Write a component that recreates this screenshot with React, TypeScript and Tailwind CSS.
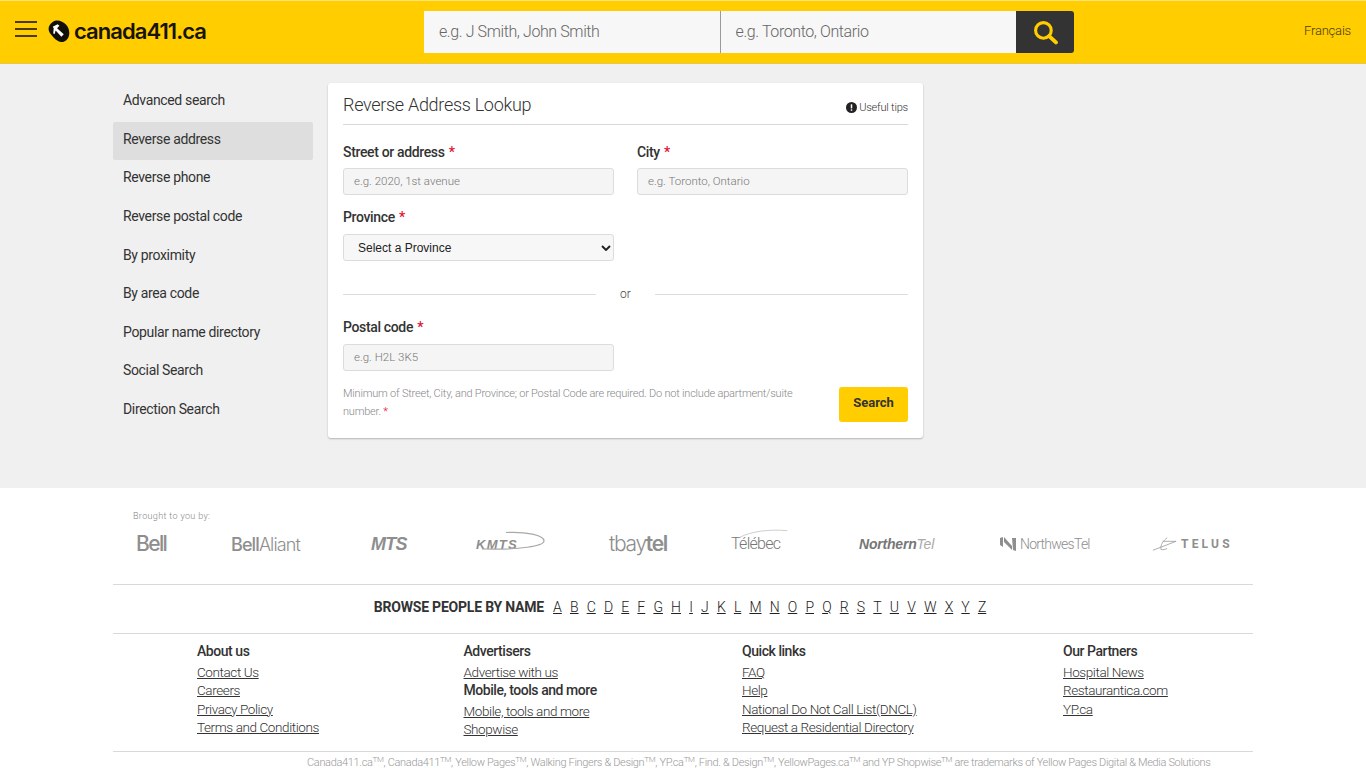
import React from "react";

const side = ["Advanced search","Reverse address","Reverse phone","Reverse postal code","By proximity","By area code","Popular name directory","Social Search","Direction Search"];
const letters = "ABCDEFGHIJKLMNOPQRSTUVWXYZ".split("");

function Label({ text }: { text: string }) {
  return (
    <label className="block text-[14px] leading-[20px] font-medium tracking-[-0.35px] text-[#333]">
      {text} <span className="ml-[1px] text-[#e2112f]">*</span>
    </label>
  );
}

function Field({ ph }: { ph: string }) {
  return (
    <input
      placeholder={ph}
      className="mt-[6px] block h-[27px] w-full rounded-[3px] border border-[#dcdcdc] bg-[#f5f5f5] px-[10px] pb-[2px] text-[11.5px] font-light text-[#555] placeholder:text-[#777] outline-none"
    />
  );
}

function LinkCol({ className, children }: { className: string; children: React.ReactNode }) {
  return <div className={"flex flex-col text-[13.5px] leading-[18.6px] font-light text-[#333] " + className}>{children}</div>;
}

function A({ t }: { t: string }) {
  return <a className="underline block w-fit tracking-[-0.4px]">{t}</a>;
}

function H({ t }: { t: string }) {
  return <div className="font-medium text-[14px] mb-[2px] tracking-[-0.45px]">{t}</div>;
}

export default function App() {
  return (
    <div className="h-[768px] overflow-hidden bg-white font-['Roboto',sans-serif] text-[#333]">
      <header className="flex h-[64px] items-center bg-[#ffcd00] border-b border-[#e8c64a] border-t border-t-[#ffe27a]">
        <div className="ml-[15px] mt-[-7px] flex w-[22px] flex-col gap-[5px]">
          <div className="h-[2px] bg-[#4a3c10]" />
          <div className="h-[2px] bg-[#4a3c10]" />
          <div className="h-[2px] bg-[#4a3c10]" />
        </div>
        <svg viewBox="0 0 24 24" className="ml-[10px] mt-[-2px] h-[24px] w-[23px]">
          <path d="M6 2.500C10 -0.5 16 1 20 5.500c3.500 4 4.500 10 1.500 14.500-2.500 3.500-7 4.500-10 2.500C8 20.500 5.500 17 3 14 .5 10.500 1.500 5.500 6 2.500Z" fill="#120f08" />
          <path d="M6 7.500 11 5l2 1.500-2.500 2.500 7 6.500-2.500 2.500-6-6.500-1 3.500-1.500-.5.500-5.500Z" fill="#fff" />
        </svg>
        <div className="ml-[4px] mt-[-3px] w-[133px] whitespace-nowrap text-[22px] font-semibold leading-none tracking-[-0.95px] text-[#171308] font-['Inter',sans-serif]">canada411.ca</div>
        <div className="ml-[217px] flex h-[42px] w-[650px]">
          <input placeholder="e.g. J Smith, John Smith" className="h-full w-[297px] border-r border-[#9a9a9a] bg-[#f7f7f7] px-[15px] pb-[2px] text-[16px] font-light tracking-[-0.4px] outline-none placeholder:text-[#666]" />
          <input placeholder="e.g. Toronto, Ontario" className="h-full w-[296px] bg-[#f7f7f7] px-[15px] pb-[2px] text-[16px] font-light tracking-[-0.4px] outline-none placeholder:text-[#666]" />
          <div className="flex h-full w-[58px] items-center justify-center rounded-r-[3px] bg-[#333]">
            <svg viewBox="0 0 24 24" className="h-[25px] w-[25px]" fill="none" stroke="#ffcd00" strokeLinecap="round">
              <circle cx="10" cy="10" r="7.500" strokeWidth="3" />
              <path d="M15.500 15.500 22 21.500" strokeWidth="3.800" />
            </svg>
          </div>
        </div>
        <a className="ml-auto mr-[15px] mt-[-2px] text-[13px] font-light tracking-[-0.2px] text-[#4a3c10]">Français</a>
      </header>

      <main className="flex h-[424px] bg-[#f0f0f0] pl-[113px] pt-[19px]">
        <nav className="mr-[15px] w-[200px] text-[14px] font-normal tracking-[-0.35px] text-[#333]">
          {side.map((s, i) => (
            <div key={s} className={"flex h-[38.6px] items-center rounded-[2px] pb-[3px] pl-[10px] " + (i === 1 ? "bg-[#dedede]" : "")}>{s}</div>
          ))}
        </nav>
        <section className="h-[355px] w-[595px] rounded-[3px] bg-white px-[15px] shadow-[0_1px_2px_rgba(0,0,0,0.25)]">
          <div className="flex h-[42px] items-end justify-between border-b border-[#d9d9d9] pb-[6px]">
            <h1 className="text-[18px] font-light leading-[26px] tracking-[-0.3px] text-[#333]">Reverse Address Lookup</h1>
            <div className="mb-[2px] flex items-center gap-[2px] text-[11px] font-light tracking-[-0.2px] text-[#333]">
              <svg viewBox="0 0 12 12" className="h-[11px] w-[11px]">
                <circle cx="6" cy="6" r="6" fill="#222" />
                <rect x="5.200" y="2.500" width="1.600" height="4.500" fill="#fff" />
                <rect x="5.200" y="8" width="1.600" height="1.600" fill="#fff" />
              </svg>
              Useful tips
            </div>
          </div>

          <div className="mt-[17px] flex gap-[23px]">
            <div className="w-[271px]"><Label text="Street or address" /><Field ph="e.g. 2020, 1st avenue" /></div>
            <div className="w-[271px]"><Label text="City" /><Field ph="e.g. Toronto, Ontario" /></div>
          </div>

          <div className="mt-[12px] w-[271px]">
            <Label text="Province" />
            <div className="relative mt-[7px]">
              <select className="block h-[27px] w-full appearance-none rounded-[3px] border border-[#dcdcdc] bg-[#f7f7f7] pl-[14px] font-['Liberation_Sans',sans-serif] text-[12px] text-[#222] outline-none">
                <option>Select a Province</option>
              </select>
              <svg viewBox="0 0 10 6" className="pointer-events-none absolute right-[3px] top-[11px] h-[6px] w-[10px]" fill="none" stroke="#222" strokeWidth="1.900"><path d="M1 1l4 4 4-4" /></svg>
            </div>
          </div>

          <div className="mt-[24px] flex items-center text-[12px] font-light text-[#444]">
            <div className="h-px w-[253px] bg-[#dcdcdc]" />
            <div className="w-[59px] text-center">or</div>
            <div className="h-px flex-1 bg-[#dcdcdc]" />
          </div>

          <div className="mt-[14px] w-[271px] [&_input]:mt-[7px]"><Label text="Postal code" /><Field ph="e.g. H2L 3K5" /></div>

          <div className="mt-[13px] flex items-start justify-between">
            <p className="mt-[1px] w-[478px] text-[11px] font-light leading-[18px] tracking-[-0.21px] text-[#888]">
              Minimum of Street, City, and Province; or Postal Code are required. Do not include apartment/suite number. <span className="text-[#e2112f]">*</span>
            </p>
            <button className="mt-[3px] h-[35px] w-[69px] rounded-[3px] bg-[#ffcd00] pb-[4px] text-[13px] font-bold text-[#333]">Search</button>
          </div>
        </section>
      </main>

      <footer className="mx-[113px]">
        <div className="h-[97px] border-b border-[#d9d9d9] pt-[22px]">
          <div className="pl-[20px] text-[9px] font-light leading-[12px] tracking-[0.35px] text-[#888]">Brought to you by:</div>
          <div className="relative mt-[7px] flex h-[30px] items-center text-[#8e8e8e]">
            <div className="ml-[23px] w-[95px] text-[21px] font-['Inter',sans-serif] font-medium tracking-[-1.6px]">Bell</div>
            <div className="w-[140px] text-[18px] font-['Inter',sans-serif] tracking-[-0.9px]"><span className="font-medium">Bell</span><span className="font-light">Aliant</span></div>
            <div className="w-[105px] text-[18px] font-['Liberation_Sans',sans-serif] font-bold italic tracking-[-0.8px]">MTS</div>
            <div className="relative w-[133px]">
              <span className="text-[13px] font-['Liberation_Sans',sans-serif] font-bold italic tracking-[1.300px]">KMTS</span>
              <svg viewBox="0 0 70 20" className="absolute left-0 top-[-1px] h-[20px] w-[70px]" fill="none" stroke="#a8a8a8" strokeWidth="1.200"><path d="M30 1.500C50 .5 68 4 68 10c0 5-24 9-62 8" /></svg>
            </div>
            <div className="w-[122px] text-[21px] font-['Inter',sans-serif] tracking-[-1.300px]"><span className="font-light">tbay</span><span className="font-semibold">tel</span></div>
            <div className="relative w-[128px] text-[16px] font-light tracking-[-0.7px] text-[#777]">
              Télébec
              <svg viewBox="0 0 60 12" className="absolute left-[6px] top-[-3px] h-[10px] w-[54px]" fill="none" stroke="#c4c4c4"><path d="M1 10C14 3 36 0 58 2" /></svg>
            </div>
            <div className="w-[141px] text-[14px] font-['Liberation_Sans',sans-serif] font-bold italic tracking-[-0.2px] text-[#777]">Northern<span className="font-light text-[#aaa]">Tel</span></div>
            <div className="flex w-[152px] items-center gap-[4px] text-[14px] font-light tracking-[-0.75px]">
              <svg viewBox="0 0 16 14" className="h-[14px] w-[16px]" fill="#8e8e8e"><path d="M0 1l3-1v10l-3-2ZM4 0l8 9V13L4 5ZM12 1h4v13l-3-1Z" /></svg>
              NorthwesTel
            </div>
            <div className="flex items-center gap-[4px] text-[12px] font-bold tracking-[3.200px]">
              <svg viewBox="0 0 28 16" className="h-[16px] w-[25px]" fill="none" stroke="#9a9a9a" strokeWidth=".9"><path d="M1 15 27 5M12 5h15M17 1c-4 3-8 8-7 13 2 1 5 0 7-1" /></svg>
              TELUS
            </div>
          </div>
        </div>

        <div className="flex h-[49px] items-center justify-center border-b border-[#d9d9d9] pb-[4px] pr-[6px] text-[14px]">
          <span className="mr-[9px] font-bold tracking-[-0.2px] text-[#333]">BROWSE PEOPLE BY NAME</span>
          <div className="flex gap-[8.15px] font-light text-[#222]">
            {letters.map((l) => <a key={l} className="underline">{l}</a>)}
          </div>
        </div>

        <div className="flex h-[118px] border-b border-[#d9d9d9] pt-[8px]">
          <LinkCol className="ml-[84px] w-[266.500px]">
            <H t="About us" /><A t="Contact Us" /><A t="Careers" /><A t="Privacy Policy" /><A t="Terms and Conditions" />
          </LinkCol>
          <LinkCol className="w-[278.500px]">
            <H t="Advertisers" /><A t="Advertise with us" /><div className="mb-[2px] font-medium text-[14px] tracking-[-0.45px]">Mobile, tools and more</div><A t="Mobile, tools and more" /><A t="Shopwise" />
          </LinkCol>
          <LinkCol className="w-[321px]">
            <H t="Quick links" /><A t="FAQ" /><A t="Help" /><A t="National Do Not Call List(DNCL)" /><A t="Request a Residential Directory" />
          </LinkCol>
          <LinkCol className="w-[190px]">
            <H t="Our Partners" /><A t="Hospital News" /><A t="Restaurantica.com" /><A t="YP.ca" />
          </LinkCol>
        </div>

        <div className="whitespace-nowrap pl-[194px] pt-[3px] text-[11px] font-light leading-[16px] tracking-[-0.33px] text-[#999] [&_sup]:text-[8px]">
          Canada411.ca<sup>TM</sup>, Canada411<sup>TM</sup>, Yellow Pages<sup>TM</sup>, Walking Fingers &amp; Design<sup>TM</sup>, YP.ca<sup>TM</sup>, Find. &amp; Design<sup>TM</sup>, YellowPages.ca<sup>TM</sup> and YP Shopwise<sup>TM</sup> are trademarks of Yellow Pages Digital &amp; Media Solutions
        </div>
      </footer>
    </div>
  );
}
